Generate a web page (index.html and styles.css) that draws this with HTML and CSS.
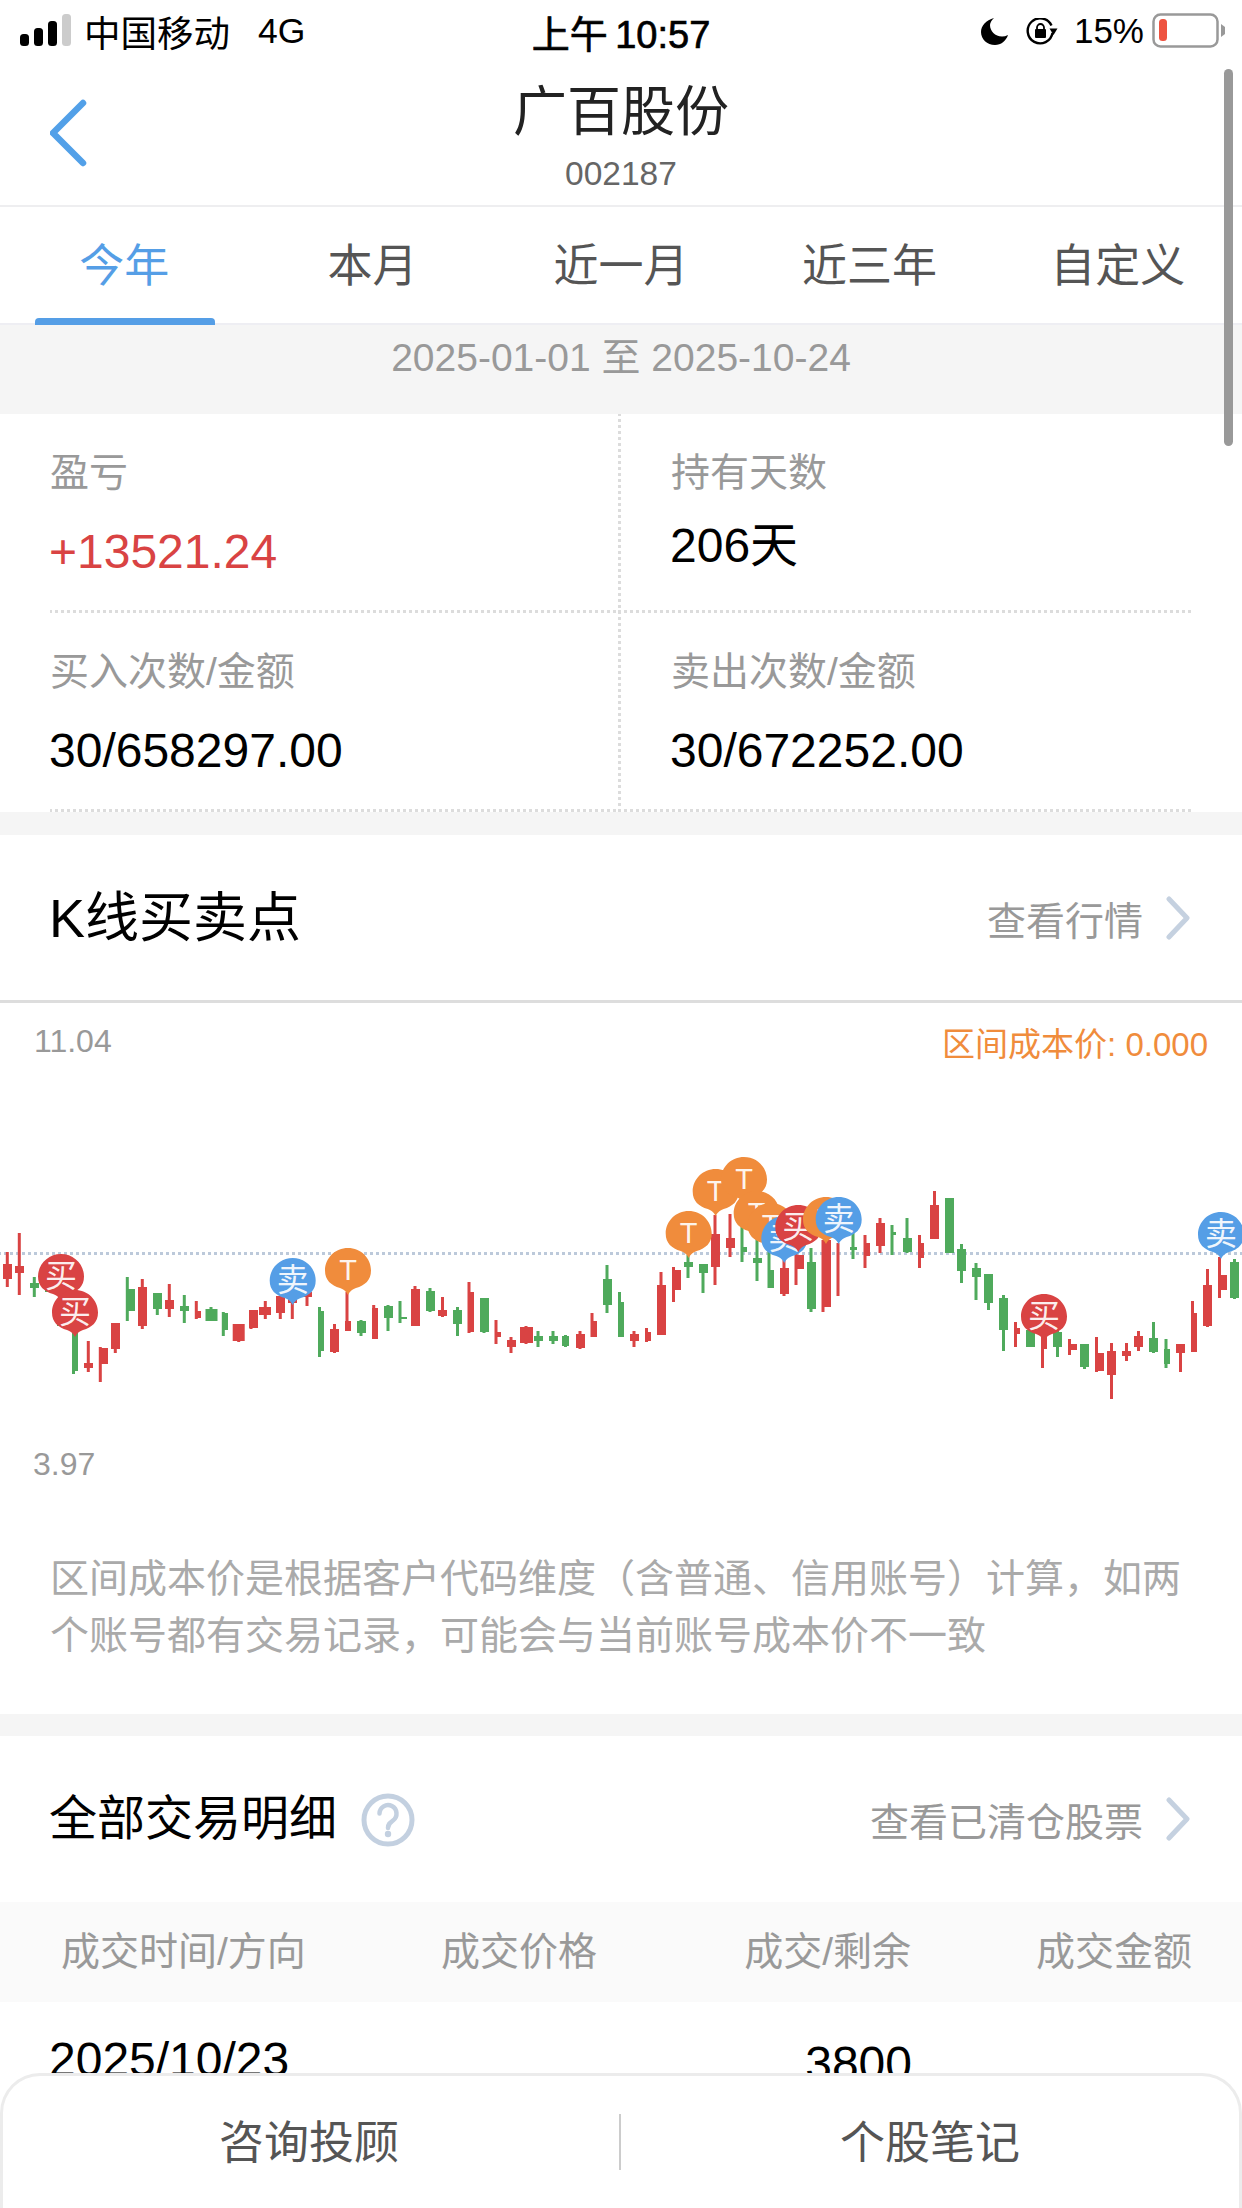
FILE: index.html
```html
<!DOCTYPE html>
<html lang="zh-CN">
<head>
<meta charset="utf-8">
<title>广百股份</title>
<link rel="stylesheet" href="styles.css">
</head>
<body>
<div class="page">
  <div class="status">
    <div class="status-left">
      <svg class="signal" width="52" height="34" viewBox="0 0 52 34"><rect x="0" y="20" width="9" height="12" rx="3.5" fill="#000"/><rect x="14" y="14" width="9" height="18" rx="3.5" fill="#000"/><rect x="28" y="7" width="9" height="25" rx="3.5" fill="#000"/><rect x="42" y="0" width="9" height="32" rx="3.5" fill="#ccc"/></svg>
      <span class="carrier">中国移动</span><span class="net">4G</span>
    </div>
    <div class="clock">上午 10:57</div>
    <div class="status-right">
      <svg width="27" height="27" viewBox="0 0 27 27"><path d="M13 0C5 2 0 8 0 14C0 21 6 27 14 27C20 27 25 23 27 17C25 18 23 18.5 21 18.5C14 18.5 9 13 9 7C9 4.5 11 2 13 0Z" fill="#000"/></svg>
      <svg class="lock" width="32" height="27" viewBox="0 0 32 27"><path d="M25.5 7.5A12.5 12.5 0 1 0 26.5 15" fill="none" stroke="#000" stroke-width="2.4"/><path d="M23.5 10.5H31.5L27.5 17Z" fill="#000"/><rect x="9" y="11" width="11" height="9" rx="1" fill="#000"/><path d="M11 11.5V9.5a3.5 3.5 0 0 1 7 0V11.500" fill="none" stroke="#000" stroke-width="1.8"/></svg>
      <span class="pct">15%</span>
      <svg class="battery" width="74" height="36" viewBox="0 0 74 36"><rect x="1.500" y="1.500" width="64" height="32" rx="7" fill="#fff" stroke="#999" stroke-width="2.500"/><rect x="7" y="6" width="8" height="22" rx="3.500" fill="#ee5340"/><path d="M69 11L73 14V21L69 24Z" fill="#999"/></svg>
    </div>
  </div>

  <header class="nav">
    <svg class="back" width="40" height="70" viewBox="0 0 40 70"><path d="M33 5L3 35L33 65" fill="none" stroke="#52a0e8" stroke-width="6.500" stroke-linecap="round" stroke-linejoin="round"/></svg>
    <h1 class="nav-title">广百股份</h1>
    <div class="nav-code">002187</div>
  </header>

  <nav class="tabs">
    <div class="tab tab-active">今年</div>
    <div class="tab">本月</div>
    <div class="tab">近一月</div>
    <div class="tab">近三年</div>
    <div class="tab">自定义</div>
  </nav>

  <div class="range">2025-01-01 至 2025-10-24</div>

  <section class="stats">
    <div class="stat stat-left">
      <div class="stat-label">盈亏</div>
      <div class="stat-value stat-gain">+13521.24</div>
    </div>
    <div class="stat stat-right">
      <div class="stat-label">持有天数</div>
      <div class="stat-value stat-days">206天</div>
    </div>
    <div class="stat stat-left">
      <div class="stat-label">买入次数/金额</div>
      <div class="stat-value">30/658297.00</div>
    </div>
    <div class="stat stat-right">
      <div class="stat-label">卖出次数/金额</div>
      <div class="stat-value">30/672252.00</div>
    </div>
  </section>

  <section class="panel panel-k">
    <div class="panel-head panel-head-line">
      <h2 class="panel-title panel-title-k">K线买卖点</h2>
      <div class="panel-link">查看行情
        <svg class="chev" width="26" height="44" viewBox="0 0 26 44"><path d="M4 3L22 22L4 41" fill="none" stroke="#c5d1e0" stroke-width="5" stroke-linecap="round" stroke-linejoin="round"/></svg>
      </div>
    </div>

    <svg class="chart" width="1242" height="497" viewBox="0 1003 1242 497">
      <defs>
        <path id="pin" d="M0 0C-1.500 -3 -3 -5 -8 -7C-17 -9.500 -23 -15 -23 -24.500C-23 -37 -12.700 -47 0 -47C12.700 -47 23 -37 23 -24.500C23 -15 17 -9.500 8 -7C3 -5 1.500 -3 0 0Z"/>
      </defs>
      <text class="axis" x="34" y="1052">11.04</text>
      <text class="axis" x="33" y="1475">3.97</text>
      <text class="cost" x="1208" y="1056" text-anchor="end">区间成本价: 0.000</text>
      <line class="ref-line" x1="-2" y1="1253.500" x2="1242" y2="1253.500"/>

      <path class="wick-g" d="M34.300 1277V1297M47 1285V1292M59 1318V1326M73.500 1333V1374M127.300 1277V1321M157.300 1293V1315M184.300 1295V1323M211 1307V1321M223.300 1312V1336M319.500 1307V1357M361 1320V1336M388 1305V1331M400 1301V1323M430 1288V1312M457.500 1307V1336M484 1298V1333M538 1331V1347M553 1331V1344M565.500 1335V1347M607 1265V1313M619.500 1292V1337M688 1255V1278M703 1264V1293M742 1223V1262M757 1237V1281M769 1250V1288M811 1248V1312M853 1233V1259M892 1225V1255M907 1218V1253M949 1198V1253M961.500 1244V1283M976 1263V1300M988.500 1274V1310M1003.500 1295V1351M1030 1330V1347M1057.500 1330V1357M1084.500 1344V1369M1153.500 1322V1353M1166 1339V1368M1234.500 1259V1299"/>
      <path class="body-g" d="M30 1283H39V1288H30ZM45 1285H50V1292H45ZM57 1320H62V1326H57ZM72 1333H78V1371H72ZM126 1289H135V1311H126ZM153 1293H162V1309H153ZM180 1306H189V1311H180ZM205.500 1309H217.500V1321H205.500ZM222 1313H228V1330H222ZM318 1311H324V1351H318ZM357 1321H366V1333H357ZM384 1306H393V1318H384ZM399 1317H407V1319H399ZM426 1291H435V1311H426ZM453 1310H462V1324H453ZM480 1298H489V1332H480ZM534 1336H543V1341H534ZM549 1336H558V1341H549ZM562 1336H569V1346H562ZM603 1279H612V1305H603ZM618 1302H624V1337H618ZM684 1262H693V1267H684ZM699 1264H708V1273H699ZM741 1247H747V1252H741ZM753 1258H762V1263H753ZM768 1270H774V1288H768ZM807 1262H816V1309H807ZM850 1247H857V1250H850ZM891 1232H896V1235H891ZM903 1238H912V1252H903ZM945 1198H954V1253H945ZM957 1249H966V1271H957ZM972 1268H981V1277H972ZM984 1274H993V1303H984ZM999 1298H1008V1330H999ZM1026 1330H1035V1347H1026ZM1053 1332H1062V1347H1053ZM1080 1344H1089V1367H1080ZM1149 1338H1158V1352H1149ZM1164 1349H1170V1364H1164ZM1230 1262H1239V1298H1230Z"/>
      <path class="wick-r" d="M7.300 1252V1287M19.300 1233V1295M88.300 1341V1372M100.300 1347V1382M115.300 1323V1353M142.300 1279V1329M169.300 1284V1317M196.300 1301V1319M238.700 1324V1342M251 1310V1329M265.300 1301V1319M280.300 1296V1319M292.300 1295V1319M307 1290V1306M334.500 1324V1353M347 1292V1331M373.700 1305V1339M415 1286V1326M442.500 1297V1317M469 1282V1333M496 1320V1344M511 1337V1353M526 1326V1344M580 1331V1349M592 1313V1337M634 1331V1347M646.500 1328V1342M661 1272V1335M673.500 1267V1302M715 1215V1285M730 1214V1257M784 1260V1296M796 1253V1285M823 1240V1312M838 1243V1296M865 1235V1268M880 1218V1253M919.500 1235V1268M934.500 1191V1239M1015.500 1322V1347M1042.500 1333V1368M1069.500 1339V1355M1096.500 1337V1372M1111.500 1343V1399M1126.500 1343V1361M1138.500 1331V1351M1180.500 1344V1372M1192.500 1301V1352M1207.500 1269V1327M1219.500 1257V1298"/>
      <path class="body-r" d="M3 1264H12V1279H3ZM15 1266H24V1273H15ZM84 1363H93V1368H84ZM99 1348H108V1364H99ZM111 1323H120V1349H111ZM138 1287H147V1326H138ZM165 1300H174V1309H165ZM195 1311H201V1318H195ZM232.700 1324H244.700V1341H232.700ZM249 1310H258V1328H249ZM259 1307H271V1315H259ZM276 1296H285V1313H276ZM288 1298H297V1303H288ZM302.500 1292H312V1297H302.500ZM330 1329H339V1352H330ZM345 1321H351V1331H345ZM372 1308H378V1339H372ZM411 1289H420V1326H411ZM438 1310H447V1316H438ZM468 1292H474V1332H468ZM495 1332H501V1337H495ZM507 1340H516V1347H507ZM520 1327H533V1343H520ZM576 1334H585V1348H576ZM591 1321H597V1337H591ZM630 1334H639V1341H630ZM645 1332H651V1341H645ZM657 1285H666V1335H657ZM672 1270H681V1290H672ZM711 1234H720V1267H711ZM726 1238H735V1248H726ZM780 1268H789V1294H780ZM795 1255H804V1269H795ZM822 1240H831V1307H822ZM864 1243H870V1256H864ZM876 1223H885V1246H876ZM918 1243H924V1258H918ZM930 1205H939V1239H930ZM1014 1328H1020V1334H1014ZM1041 1337H1047V1349H1041ZM1068 1344H1077V1350H1068ZM1095 1353H1104V1371H1095ZM1107 1351H1116V1375H1107ZM1122 1351H1131V1356H1122ZM1134 1336H1143V1347H1134ZM1176 1344H1185V1353H1176ZM1191 1313H1197V1352H1191ZM1203 1285H1212V1326H1203ZM1218 1275H1227V1290H1218Z"/>

      <g class="pin pin-r" transform="translate(61 1301)"><use href="#pin"/><text y="-14">买</text></g>
      <g class="pin pin-r" transform="translate(75 1337)"><use href="#pin"/><text y="-14">买</text></g>
      <g class="pin pin-b" transform="translate(292.700 1305)"><use href="#pin"/><text y="-14">卖</text></g>
      <g class="pin pin-o" transform="translate(348 1295)"><use href="#pin"/><text class="pin-t" y="-15">T</text></g>
      <g class="pin pin-o" transform="translate(688.700 1258)"><use href="#pin"/><text class="pin-t" y="-15">T</text></g>
      <g class="pin pin-o" transform="translate(715.700 1216)"><use href="#pin"/><text class="pin-t" y="-15">T</text></g>
      <g class="pin pin-o" transform="translate(744 1204)"><use href="#pin"/><text class="pin-t" y="-15">T</text></g>
      <g class="pin pin-o" transform="translate(756.700 1238)"><use href="#pin"/><text class="pin-t" y="-15">T</text></g>
      <g class="pin pin-o" transform="translate(770.700 1250)"><use href="#pin"/><text class="pin-t" y="-15">T</text></g>
      <g class="pin pin-b" transform="translate(784.300 1263)"><use href="#pin"/><text y="-14">卖</text></g>
      <g class="pin pin-r" transform="translate(798.300 1252)"><use href="#pin"/><text y="-14">买</text></g>
      <g class="pin pin-o" transform="translate(826 1244)"><use href="#pin"/><text class="pin-t" y="-15">T</text></g>
      <g class="pin pin-b" transform="translate(838.700 1244)"><use href="#pin"/><text y="-14">卖</text></g>
      <g class="pin pin-r" transform="translate(1044 1341)"><use href="#pin"/><text y="-14">买</text></g>
      <g class="pin pin-b" transform="translate(1221 1259)"><use href="#pin"/><text y="-14">卖</text></g>
    </svg>

    <p class="note">区间成本价是根据客户代码维度（含普通、信用账号）计算，如两个账号都有交易记录，可能会与当前账号成本价不一致</p>
  </section>

  <section class="panel panel-detail">
    <div class="panel-head panel-head-detail">
      <div class="panel-title-wrap">
        <h2 class="panel-title">全部交易明细</h2>
        <svg class="help" width="56" height="56" viewBox="-28 -28 56 56"><circle r="24" fill="none" stroke="#c3d0e0" stroke-width="5"/><path d="M-8.500 -6.500a8.500 8.500 0 1 1 13.500 7c-3 2.200 -5 3.500 -5 7.500" fill="none" stroke="#c3d0e0" stroke-width="4.500" stroke-linecap="round"/><circle cy="14" r="3.200" fill="#c3d0e0"/></svg>
      </div>
      <div class="panel-link">查看已清仓股票
        <svg class="chev" width="26" height="44" viewBox="0 0 26 44"><path d="M4 3L22 22L4 41" fill="none" stroke="#c5d1e0" stroke-width="5" stroke-linecap="round" stroke-linejoin="round"/></svg>
      </div>
    </div>
    <div class="table-grid table-head">
      <div class="col-first">成交时间/方向</div>
      <div>成交价格</div>
      <div class="col-end">成交/剩余</div>
      <div class="col-end">成交金额</div>
    </div>
    <div class="table-grid table-row">
      <div>2025/10/23</div>
      <div></div>
      <div class="col-end col-qty">3800</div>
      <div></div>
    </div>
  </section>

  <div class="scrollbar"></div>

  <footer class="bottom">
    <div class="bottom-item bottom-item-left">咨询投顾</div>
    <div class="bottom-sep"></div>
    <div class="bottom-item">个股笔记</div>
  </footer>
</div>
</body>
</html>
```

FILE: styles.css
```css
* { box-sizing: border-box; }
html, body { margin: 0; padding: 0; }
body {
  font-family: "Liberation Sans", "Noto Sans CJK SC", sans-serif;
  color: #000;
  background: #f5f5f5;
}
h1, h2, p { margin: 0; font-weight: 400; }

.page {
  position: relative;
  width: 1242px;
  height: 2208px;
  overflow: hidden;
  background: #f5f5f5;
}

/* status bar */
.status {
  height: 62px;
  background: #fff;
  display: grid;
  grid-template-columns: 1fr auto 1fr;
  align-items: center;
}
.status-left { display: flex; align-items: center; padding-left: 20px; }
.signal { flex: none; }
.carrier { font-size: 36.500px; margin-left: 12px; }
.net { font-size: 35.500px; margin-left: 28px; }
.clock { font-size: 38px; word-spacing: -3px; -webkit-text-stroke: .7px #000; }
.status-right { display: flex; align-items: center; justify-content: flex-end; padding-right: 16px; }
.lock { margin-left: 18px; }
.pct { font-size: 35px; margin-left: 16px; }
.battery { margin-left: 8px; }

/* nav */
.nav {
  position: relative;
  height: 145px;
  background: #fff;
  border-bottom: 2px solid #eeeef0;
  text-align: center;
}
.back { position: absolute; left: 50px; top: 36px; }
.nav-title { font-size: 54px; line-height: 70px; padding-top: 15px; color: #222; }
.nav-code { font-size: 33.500px; line-height: 40px; margin-top: 7px; color: #666; }

/* tabs */
.tabs {
  height: 118px;
  background: #fff;
  border-bottom: 2px solid #eeeef3;
  display: grid;
  grid-template-columns: repeat(5, 1fr);
}
.tab {
  position: relative;
  font-size: 45px;
  line-height: 120px;
  height: 116px;
  text-align: center;
  color: #555;
}
.tab-active { color: #559ee6; }
.tab-active::after {
  content: "";
  position: absolute;
  left: 35px;
  width: 180px;
  bottom: -2px;
  height: 7px;
  border-radius: 4px 4px 0 0;
  background: #559ee6;
}

.range {
  height: 89px;
  padding-top: 8px;
  line-height: 50px;
  font-size: 39px;
  text-align: center;
  color: #999;
}

/* stats: square 3px dots on a 6px pitch */
.stats {
  height: 398px;
  display: grid;
  grid-template-columns: 618px 624px;
  grid-auto-rows: 199px;
  background-color: #fff;
  background-image: linear-gradient(to bottom, #dcdcdc 50%, transparent 50%);
  background-size: 3px 6px;
  background-position: 618px 5px;
  background-repeat: repeat-y;
}
.stat {
  padding-top: 34px;
  background-image: linear-gradient(to right, #dcdcdc 50%, transparent 50%);
  background-size: 6px 3px;
  background-position: 0 100%;
  background-repeat: repeat-x;
}
.stat-left { margin-left: 50px; background-position: 5px 100%; }
.stat-right { margin-right: 50px; padding-left: 53px; }
.stat-label { font-size: 39px; line-height: 50px; color: #999; }
.stat-value { font-size: 48px; line-height: 60px; margin: 24px 0 0 -1px; }
.stat-gain { color: #d94343; }
.stat-days { margin-top: 18px; }

/* panels */
.panel { background: #fff; margin-top: 23px; }
.panel-head {
  display: flex;
  align-items: center;
  justify-content: space-between;
  padding: 0 51px 0 49px;
}
.panel-head-line { height: 168px; border-bottom: 3px solid #ddd; }
.panel-head-detail { height: 166px; }
.panel-title { font-size: 48px; line-height: 60px; }
.panel-title-k { font-size: 54px; }
.panel-title-wrap { display: flex; align-items: center; gap: 23px; }
.panel-link {
  display: flex;
  align-items: center;
  gap: 22px;
  font-size: 39px;
  color: #999;
}
.chev { display: block; }
.help { display: block; margin-top: 2px; }

/* chart */
.chart { display: block; }
.axis { font-size: 32px; fill: #999; }
.cost { font-size: 33px; fill: #f08c3c; }
.ref-line { stroke: #bcc9da; stroke-width: 3; stroke-dasharray: 3 3; }
.wick-g { stroke: #4faa5c; stroke-width: 3; fill: none; }
.body-g { fill: #4faa5c; }
.wick-r { stroke: #d94343; stroke-width: 3; fill: none; }
.body-r { fill: #d94343; }
.pin text {
  font-size: 32px;
  fill: #fff;
  fill-opacity: .92;
  text-anchor: middle;
}
.pin .pin-t { font-size: 29px; }
.pin-r { fill: #d94343; }
.pin-b { fill: #559ee6; }
.pin-o { fill: #f08c3c; }

.note {
  padding: 50px 50px 50px;
  font-size: 39px;
  line-height: 57px;
  color: #aaa;
}

/* table */
.panel-detail { margin-top: 22px; }
.table-grid {
  display: grid;
  grid-template-columns: 391px 291px 179px 281px;
  padding: 0 50px;
  white-space: nowrap;
}
.table-head {
  height: 100px;
  line-height: 100px;
  background: #fafafa;
  font-size: 39px;
  color: #999;
}
.col-first { padding-left: 11px; }
.col-end { text-align: right; }
.table-row {
  padding: 29px 50px 40px 49px;
  font-size: 48px;
  line-height: 58px;
}
.col-qty { margin: 4px -2px 0 0; }

/* overlays */
.scrollbar {
  position: absolute;
  left: 1224px;
  top: 69px;
  width: 9px;
  height: 377px;
  border-radius: 5px;
  background: #999;
}
.bottom {
  position: absolute;
  left: 0;
  right: 0;
  bottom: 0;
  height: 135px;
  display: grid;
  grid-template-columns: 616px 2px 1fr;
  align-items: center;
  background: #fff;
  border: 3px solid #ececec;
  border-bottom: 0;
  border-radius: 40px 40px 0 0;
}
.bottom-item { text-align: center; font-size: 45px; color: #555; padding-bottom: 5px; }
.bottom-item-left { padding-right: 4px; }
.bottom-sep { height: 56px; background: #ccc; }
```
